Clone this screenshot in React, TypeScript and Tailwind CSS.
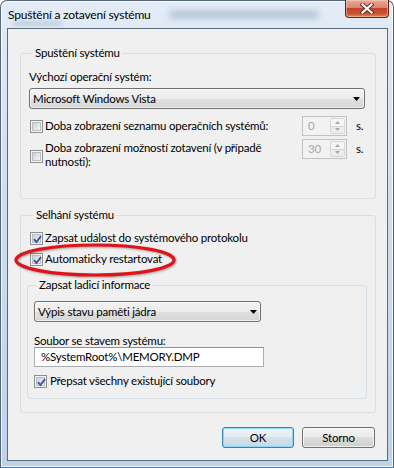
import React from 'react';

function CheckBox({ checked }: { checked?: boolean }) {
  return (
    <span className="relative flex h-[13px] w-[13px] shrink-0 items-center justify-center border border-[#8e8f8f] bg-[#f4f4f4]">
      <span className="h-[9px] w-[9px] border border-[#b9bec4] bg-[linear-gradient(135deg,#c9cdd3,#f7f7f7)]" />
      {checked && (
        <svg className="absolute left-[1px] top-[1px]" width="11" height="11" viewBox="0 0 11 11">
          <path d="M2 5.2 L4.4 8 L9 2.2" fill="none" stroke="#3b54a0" strokeWidth="1.9" />
        </svg>
      )}
    </span>
  );
}

function Combo({ text, wide }: { text: string; wide?: boolean }) {
  return (
    <div
      className={
        wide
          ? 'flex h-[21px] w-[336px] items-center justify-between rounded-[3px] border border-[#707070] bg-[linear-gradient(#f3f3f3_0%,#ececec_50%,#e0e0e0_50%,#d6d6d6_100%)] pl-[3px] pr-[4px] shadow-[inset_0_0_0_1px_rgba(255,255,255,0.6)]'
          : 'flex h-[21px] w-[227px] items-center justify-between rounded-[3px] border border-[#707070] bg-[linear-gradient(#f3f3f3_0%,#ececec_50%,#e0e0e0_50%,#d6d6d6_100%)] pl-[3px] pr-[3px] shadow-[inset_0_0_0_1px_rgba(255,255,255,0.6)]'
      }
    >
      <span className="leading-[16px]">{text}</span>
      <svg width="7" height="4" viewBox="0 0 7 4">
        <path d="M0 0 H7 L3.5 4 Z" fill="#000" />
      </svg>
    </div>
  );
}

function Spin({ value }: { value: string }) {
  return (
    <div className="flex h-[20px] w-[45px] shrink-0 border border-[#c2c2c2] bg-[#f2f2f2] p-[1px]">
      <span className="flex-1 pl-[4px] leading-[16px] text-[#a6a6a6]">{value}</span>
      <div className="flex w-[15px] flex-col">
        <span className="flex flex-1 items-center justify-center rounded-t-[2px] border border-[#d6d6d6] bg-[#f6f6f6]">
          <svg width="5" height="3" viewBox="0 0 5 3">
            <path d="M0 3 L2.5 0 L5 3 Z" fill="#a8a8a8" />
          </svg>
        </span>
        <span className="flex flex-1 items-center justify-center rounded-b-[2px] border border-t-0 border-[#d6d6d6] bg-[#ececec]">
          <svg width="5" height="3" viewBox="0 0 5 3">
            <path d="M0 0 L5 0 L2.5 3 Z" fill="#a8a8a8" />
          </svg>
        </span>
      </div>
    </div>
  );
}

export default function App() {
  return (
    <div className="relative h-[468px] w-[394px] rounded-t-[7px] border border-[#56677a] border-b-[#2f86c2] bg-[linear-gradient(180deg,#e3ecf6_0%,#d3e1ef_30%,#bdd3ea_100%)] font-['Lato',sans-serif] text-[11.5px] tracking-[-0.2px] text-black shadow-[inset_0_0_0_1px_rgba(255,255,255,0.75)]">
      {/* title bar */}
      <div className="relative flex h-[27px] items-center pl-[7px]">
        <span className="absolute left-[168px] top-[9px] h-[9px] w-[150px] rounded-full bg-[#8ea6bf] opacity-50 blur-[3px]" />
        <span className="absolute left-[12px] top-[20px] h-[5px] w-[50px] rounded-full bg-[#9fb4c9] opacity-50 blur-[2px]" />
        <span className="relative text-[12px] leading-[16px]">Spuštění a zotavení systému</span>
      </div>

      {/* close button */}
      <div className="absolute right-[4px] top-[-1px] flex h-[18px] w-[44px] items-center justify-center rounded-b-[4px] border border-t-0 border-[#6a2115] bg-[linear-gradient(#e7a999_0%,#d98672_45%,#c2452a_50%,#c9522f_80%,#e58a56_100%)] shadow-[inset_0_0_0_1px_rgba(255,220,200,0.45)]">
        <svg width="14" height="11" viewBox="0 0 14 11">
          <path d="M2.5 1.5 L11.5 9.5 M11.5 1.5 L2.5 9.5" stroke="#5a2a20" strokeWidth="4" strokeLinecap="square" />
          <path d="M2.5 1.5 L11.5 9.5 M11.5 1.5 L2.5 9.5" stroke="#ffffff" strokeWidth="2.2" strokeLinecap="square" />
        </svg>
      </div>

      {/* client area */}
      <div className="ml-[6px] mr-[5px] h-[433px] border border-[#5b6a7a] bg-[#f0f0f0]">
        {/* Spuštění systému */}
        <fieldset className="ml-[12px] mt-[16px] h-[154px] w-[356px] rounded-[3px] border border-[#d5dfe5] pl-[8px] pr-[7px]">
          <legend className="ml-[4px] px-[2px] leading-[16px]">Spuštění systému</legend>
          <div className="mt-[8px] leading-[16px]">Výchozí operační systém:</div>
          <div className="mt-[3px]">
            <Combo text="Microsoft Windows Vista" wide />
          </div>
          <div className="mt-[7px] flex h-[20px] items-center">
            <span className="ml-[1px]">
              <CheckBox />
            </span>
            <span className="ml-[2px] leading-[16px]">Doba zobrazení seznamu operačních systémů:</span>
            <span className="ml-auto">
              <Spin value="0" />
            </span>
            <span className="ml-[9px] w-[12px] leading-[16px]">s.</span>
          </div>
          <div className="mt-[3px] flex items-start">
            <span className="ml-[1px] mt-[11px]">
              <CheckBox />
            </span>
            <span className="ml-[2px] mt-[2px] leading-[14px]">
              Doba zobrazení možností zotavení (v případě
              <br />
              nutnosti):
            </span>
            <span className="ml-auto">
              <Spin value="30" />
            </span>
            <span className="ml-[9px] mt-[2px] w-[12px] leading-[16px]">s.</span>
          </div>
        </fieldset>

        {/* Selhání systému */}
        <fieldset className="ml-[12px] mt-[8px] h-[206px] w-[356px] rounded-[3px] border border-[#d5dfe5] pl-[9px]">
          <legend className="ml-[4px] px-[2px] leading-[16px]">Selhání systému</legend>
          <div className="mt-[7px] flex h-[16px] items-center gap-[2px]">
            <CheckBox checked />
            <span className="leading-[16px]">Zapsat událost do systémového protokolu</span>
          </div>
          <div className="mt-[5px] flex h-[16px] items-center gap-[2px]">
            <CheckBox checked />
            <span className="leading-[16px]">Automaticky restartovat</span>
          </div>

          {/* Zapsat ladicí informace */}
          <fieldset className="ml-[-3px] mt-[10px] h-[122px] w-[340px] rounded-[3px] border border-[#d5dfe5] pl-[6px]">
            <legend className="ml-[3px] px-[2px] leading-[16px]">Zapsat ladicí informace</legend>
            <div className="mt-[8px]">
              <Combo text="Výpis stavu paměti jádra" />
            </div>
            <div className="mt-[12px] leading-[13px]">Soubor se stavem systému:</div>
            <div className="h-[20px] w-[230px] border border-[#abadb3] border-t-[#8e9197] bg-white pl-[6px] leading-[18px]">
              %SystemRoot%\MEMORY.DMP
            </div>
            <div className="mt-[6px] flex h-[16px] items-center gap-[3px]">
              <CheckBox checked />
              <span className="leading-[16px]">Přepsat všechny existující soubory</span>
            </div>
          </fieldset>
        </fieldset>

        {/* buttons */}
        <div className="mt-[14px] flex justify-end gap-[8px] pr-[12px]">
          <button className="h-[21px] w-[72px] rounded-[3px] border border-[#3c7fb1] bg-[linear-gradient(#eef4f8_0%,#e3ecf2_50%,#d4e2ec_50%,#c7d9e6_100%)] leading-[16px] shadow-[inset_0_0_0_1px_#8fd6f7]">
            OK
          </button>
          <button className="h-[21px] w-[73px] rounded-[3px] border border-[#707070] bg-[linear-gradient(#f2f2f2_0%,#ebebeb_50%,#dddddd_50%,#cfcfcf_100%)] leading-[16px] shadow-[inset_0_0_0_1px_rgba(255,255,255,0.7)]">
            Storno
          </button>
        </div>
      </div>

      {/* red highlight ellipse */}
      <svg
        className="pointer-events-none absolute left-[13px] top-[242px] drop-shadow-[1px_1px_1px_rgba(0,0,0,0.35)]"
        width="164"
        height="36"
        viewBox="0 0 164 36"
      >
        <ellipse cx="81" cy="17" rx="79" ry="15" fill="none" stroke="#e1121a" strokeWidth="3.2" />
      </svg>
    </div>
  );
}
